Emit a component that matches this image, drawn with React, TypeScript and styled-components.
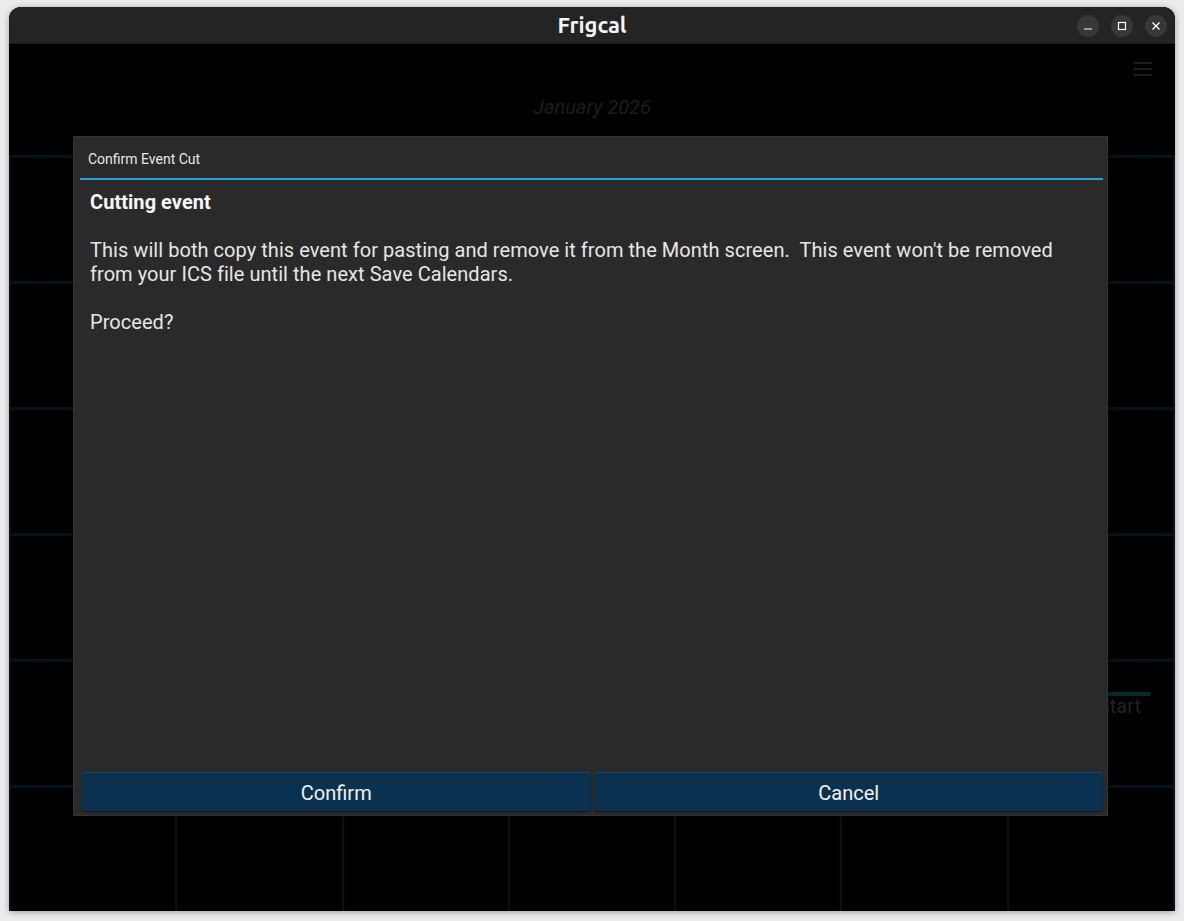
import styled, { createGlobalStyle } from "styled-components";

const GlobalStyle = createGlobalStyle`
  html, body {
    margin: 0;
    padding: 0;
    background: #ececec;
    font-family: Roboto, "Liberation Sans", sans-serif;
  }
`;

const Page = styled.div`
  height: 921px;
  padding: 7px 9px 0;
  box-sizing: border-box;
`;

const Window = styled.div`
  width: 1166px;
  height: 904px;
  display: flex;
  flex-direction: column;
  border-radius: 12px 12px 0 0;
  overflow: hidden;
  box-shadow: 0 1px 6px rgba(0, 0, 0, 0.35);
  background: #000;
`;

const TitleBar = styled.div`
  height: 37px;
  flex-shrink: 0;
  background: #242424;
  position: relative;
  display: flex;
  align-items: center;
  justify-content: center;
  border-bottom: 1px solid #1a1a1a;
  box-sizing: border-box;
`;

const AppTitle = styled.div`
  font-family: Ubuntu, "Noto Sans", "DejaVu Sans", sans-serif;
  font-weight: 700;
  font-size: 22px;
  color: #f4f4f4;
  margin-top: -1px;
`;

const Controls = styled.div`
  position: absolute;
  right: 8px;
  top: 8px;
  display: flex;
  gap: 12px;
`;

const CtrlButton = styled.div`
  width: 22px;
  height: 22px;
  border-radius: 50%;
  background: #373737;
  display: flex;
  align-items: center;
  justify-content: center;
`;

const Content = styled.div`
  flex: 1;
  position: relative;
  display: flex;
  flex-direction: column;
  background: #000;
`;

const TopRow = styled.div`
  height: 50px;
  display: flex;
  justify-content: flex-end;
  align-items: center;
  padding-right: 23px;
`;

const MenuIcon = styled.div`
  width: 18px;
  display: flex;
  flex-direction: column;
  gap: 4px;
  span {
    height: 2px;
    background: #1c1c1c;
  }
`;

const MonthTitle = styled.div`
  height: 61px;
  display: flex;
  align-items: flex-start;
  justify-content: center;
  font-style: italic;
  font-size: 20px;
  color: #1d1d1d;
  padding-top: 1px;
  box-sizing: border-box;
`;

const Grid = styled.div`
  flex: 1;
  display: grid;
  grid-template-columns: repeat(7, 1fr);
  grid-template-rows: repeat(6, 1fr);
  gap: 3px 2px;
  padding: 3px 2px 0 2px;
  background: #04121c;
`;

const Cell = styled.div`
  background: #000;
  display: flex;
  flex-direction: column;
  align-items: flex-end;
  padding: 30px 22px 0 0;
  box-sizing: border-box;
`;

const EventBar = styled.div`
  width: 120px;
  height: 4px;
  border-radius: 2px;
  background: #062a2c;
`;

const EventText = styled.div`
  font-size: 20px;
  color: #232323;
  margin: -2px 10px 0 0;
`;

const Dialog = styled.div`
  position: absolute;
  left: 64px;
  top: 92px;
  width: 1035px;
  height: 680px;
  background: #2a2a2a;
  border: 1px solid #333;
  box-sizing: border-box;
  display: flex;
  flex-direction: column;
  padding: 0 4px 4px 6px;
  box-shadow: 0 0 2px rgba(0, 0, 0, 0.6);
`;

const DialogTitle = styled.div`
  height: 43px;
  display: flex;
  align-items: center;
  padding: 2px 0 0 8px;
  box-sizing: border-box;
  font-size: 14px;
  color: #e6e6e6;
  border-bottom: 2px solid #2aa1d6;
`;

const Body = styled.div`
  flex: 1;
  padding: 10px 10px 0 10px;
  font-size: 20px;
  line-height: 24px;
  letter-spacing: 0.05px;
  color: #e6e6e6;
  white-space: pre-wrap;
  b {
    font-weight: 700;
    color: #f6f6f6;
  }
`;

const Buttons = styled.div`
  display: grid;
  grid-template-columns: 1fr 1fr;
  gap: 4px;
  padding-left: 2px;
`;

const Button = styled.div`
  height: 39px;
  padding-top: 2px;
  background: #0b3150;
  border-top: 1px solid #16476b;
  border-radius: 2px;
  box-sizing: border-box;
  display: flex;
  align-items: center;
  justify-content: center;
  font-size: 20px;
  color: #f2f2f2;
  box-shadow: 0 1px 1px rgba(0, 0, 0, 0.5);
`;

export default function App() {
  const cells = Array.from({ length: 42 }, (_, i) => i);
  return (
    <>
      <GlobalStyle />
      <Page>
        <Window>
          <TitleBar>
            <AppTitle>Frigcal</AppTitle>
            <Controls>
              <CtrlButton>
                <svg width="10" height="10" viewBox="0 0 10 10">
                  <line x1="1" y1="8" x2="9" y2="8" stroke="#fff" strokeWidth="1.2" />
                </svg>
              </CtrlButton>
              <CtrlButton>
                <svg width="10" height="10" viewBox="0 0 10 10">
                  <rect x="1.5" y="1.5" width="7" height="7" fill="none" stroke="#fff" strokeWidth="1.2" />
                </svg>
              </CtrlButton>
              <CtrlButton>
                <svg width="10" height="10" viewBox="0 0 10 10">
                  <path d="M1.5 1.5 L8.5 8.5 M8.5 1.5 L1.5 8.5" stroke="#fff" strokeWidth="1.3" />
                </svg>
              </CtrlButton>
            </Controls>
          </TitleBar>
          <Content>
            <TopRow>
              <MenuIcon>
                <span />
                <span />
                <span />
              </MenuIcon>
            </TopRow>
            <MonthTitle>January 2026</MonthTitle>
            <Grid>
              {cells.map((i) => (
                <Cell key={i}>
                  {i === 34 && (
                    <>
                      <EventBar />
                      <EventText>Start</EventText>
                    </>
                  )}
                </Cell>
              ))}
            </Grid>
            <Dialog>
              <DialogTitle>Confirm Event Cut</DialogTitle>
              <Body>
                <b>Cutting event</b>
                {"\n\nThis will both copy this event for pasting and remove it from the Month screen.  This event won't be removed from your ICS file until the next Save Calendars.\n\nProceed?"}
              </Body>
              <Buttons>
                <Button>Confirm</Button>
                <Button>Cancel</Button>
              </Buttons>
            </Dialog>
          </Content>
        </Window>
      </Page>
    </>
  );
}
